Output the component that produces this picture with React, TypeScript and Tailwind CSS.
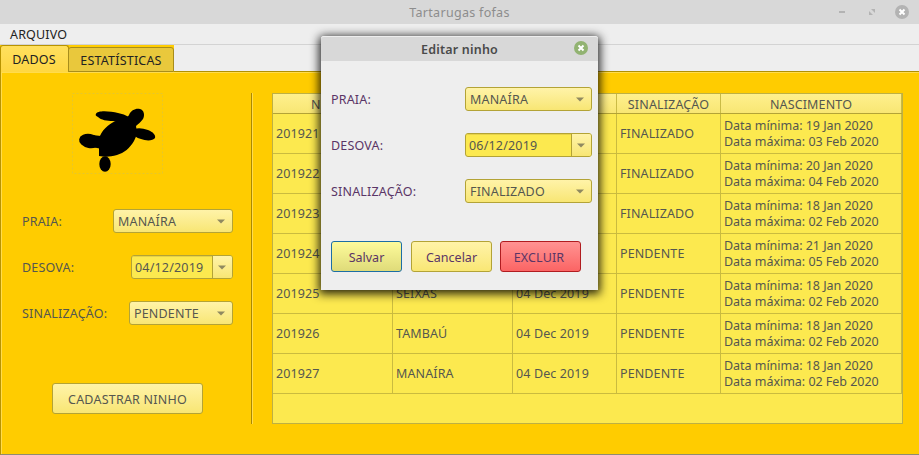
import React from "react";

const rows = [
  ["201921", "MANAÍRA", "04 Dec 2019", "FINALIZADO", "19 Jan 2020", "03 Feb 2020"],
  ["201922", "SEIXAS", "05 Dec 2019", "FINALIZADO", "20 Jan 2020", "04 Feb 2020"],
  ["201923", "MANAÍRA", "04 Dec 2019", "FINALIZADO", "18 Jan 2020", "02 Feb 2020"],
  ["201924", "MANAÍRA", "06 Dec 2019", "PENDENTE", "21 Jan 2020", "05 Feb 2020"],
  ["201925", "SEIXAS", "04 Dec 2019", "PENDENTE", "18 Jan 2020", "02 Feb 2020"],
  ["201926", "TAMBAÚ", "04 Dec 2019", "PENDENTE", "18 Jan 2020", "02 Feb 2020"],
  ["201927", "MANAÍRA", "04 Dec 2019", "PENDENTE", "18 Jan 2020", "02 Feb 2020"],
];

const columns = "grid grid-cols-[120px_120px_104px_104px_181px]";

function Arrow() {
  return (
    <svg className="h-[5px] w-2 shrink-0" viewBox="0 0 8 5">
      <path d="M0 .5h8L4 4.5z" fill="#8f8960" />
    </svg>
  );
}

function Combo({ children, className }: { children: React.ReactNode; className: string }) {
  return (
    <div
      className={`flex h-6 items-center justify-between rounded-[3px] border bg-linear-to-b from-[#fff3a8] to-[#f8e673] pr-[7px] pl-1 text-[#55574f] ${className}`}
    >
      <span className="pt-[2px] tracking-[0.18px]">{children}</span>
      <Arrow />
    </div>
  );
}

function DateField({ children, className }: { children: React.ReactNode; className: string }) {
  return (
    <div className={`flex h-6 overflow-hidden rounded-[3px] border bg-[#fce94f] text-[#55574f] ${className}`}>
      <span className="flex flex-1 items-center pt-[2px] pl-[3px] tracking-[0.18px] shadow-[inset_0_1px_0_#e6d248]">{children}</span>
      <span className="flex w-5 items-center justify-center border-l border-inherit bg-linear-to-b from-[#fff3a8] to-[#f8e673] pr-[2px]">
        <Arrow />
      </span>
    </div>
  );
}

function Field({ label, children }: { label: string; children: React.ReactNode }) {
  return (
    <div className="flex h-6 items-center justify-between">
      <span className="pt-[2px] tracking-[0.18px]">{label}</span>
      {children}
    </div>
  );
}

function Turtle() {
  return (
    <svg className="ml-[72px] h-[81px] w-[91px]" viewBox="0 0 91 81">
      <rect x=".5" y=".5" width="90" height="80" fill="none" stroke="#e5c62c" strokeDasharray="2 2" />
      <path d="M27 46C29 38 36 31 44 28C50 25 55 26 57 22C59 17 64 15 68 16C72 17 73 22 71 26C69 29 66 31 64 33C65 38 65 43 62 48C58 55 52 60 45 62C38 64 33 64 27 63V54Z" />
      <path d="M24 21C25 17 38 18 46 20Q52 21 57 24L54 32L41 28C35 28 29 27 26 24C24 23 23 22 24 21Z" />
      <path d="M62 36Q68 34 76 37C81 39 84 42 83 45C81 48 74 48 69 46Q65 45 61 42Z" />
      <ellipse cx="17.5" cy="48" rx="10.5" ry="7" transform="rotate(10 17.5 48)" />
      <path d="M20 42L29 43L30 56L20 54Z" />
      <ellipse cx="33" cy="71" rx="5.7" ry="7.8" />
    </svg>
  );
}

function CloseMark({ className }: { className: string }) {
  return (
    <svg className={`h-[14px] w-[14px] ${className}`} viewBox="0 0 14 14">
      <circle cx="7" cy="7" r="7" fill="currentColor" />
      <path d="M4.5 4.5l5 5M9.5 4.5l-5 5" stroke="#fff" strokeWidth="2" />
    </svg>
  );
}

function TitleBar() {
  return (
    <header className="grid h-6 grid-cols-[1fr_auto_1fr] items-center bg-[#d8d8d8] pr-[10px]">
      <span />
      <span className="pt-[2px] pl-[10px] tracking-[0.3px] text-[#8d8d8d]">Tartarugas fofas</span>
      <div className="flex items-center justify-end text-[#b3b3b3]">
        <span className="mr-6 h-[2px] w-[6px] bg-[#b3b3b3]" />
        <svg className="mr-5 h-[6px] w-[6px]" viewBox="0 0 6 6" fill="currentColor">
          <path d="M2 0h4v4zM0 2v4h4z" />
        </svg>
        <CloseMark className="-mt-px" />
      </div>
    </header>
  );
}

function Dialog() {
  return (
    <section className="absolute top-9 left-[321px] flex h-[254px] w-[277px] flex-col rounded-t-[3px] bg-[#eeeeee] text-[#5a3566] shadow-[0_2px_10px_2px_rgba(0,0,0,0.85)]">
      <div className="grid h-[25px] grid-cols-[1fr_auto_1fr] items-center rounded-t-[3px] border-t border-[#eeeeee] bg-[#d8d8d8] pr-[10px]">
        <span />
        <span className="pt-[2px] pl-[10px] font-semibold tracking-[0.2px] text-[#4a4a4a]">Editar ninho</span>
        <CloseMark className="-mt-[3px] justify-self-end text-[#92b372]" />
      </div>
      <div className="flex flex-col gap-[22px] pt-[26px] pr-[6px] pl-[10px]">
        <Field label="PRAIA:">
          <Combo className="w-[127px] border-[#b3a336]">MANAÍRA</Combo>
        </Field>
        <Field label="DESOVA:">
          <DateField className="w-[127px] border-[#b3a336]">06/12/2019</DateField>
        </Field>
        <Field label="SINALIZAÇÃO:">
          <Combo className="w-[127px] border-[#b3a336]">FINALIZADO</Combo>
        </Field>
      </div>
      <div className="flex pt-[38px] pl-[10px]">
        <button className="h-[31px] w-[71px] rounded-[3px] border border-[#1c6ea4] bg-linear-to-b from-[#fdfb9b] to-[#dfdb79] pt-[2px]">Salvar</button>
        <button className="ml-[9px] h-[31px] w-[81px] rounded-[3px] border border-[#b3a336] bg-linear-to-b from-[#fff3a8] to-[#f9e774] pt-[2px]">Cancelar</button>
        <button className="ml-2 h-[31px] w-[81px] rounded-[3px] border border-[#b01c20] bg-linear-to-b from-[#ff9292] to-[#fb6464] pt-[2px] pr-[3px] tracking-[0.15px]">EXCLUIR</button>
      </div>
    </section>
  );
}

export default function App() {
  return (
    <div className="relative flex h-[455px] w-[919px] flex-col overflow-hidden bg-[#eeeeee] font-['Noto_Sans',sans-serif] text-[12.5px] leading-4 whitespace-nowrap text-[#55574f]">
      <TitleBar />
      <nav className="flex h-[21px] items-center border-b border-[#d3d3d3] pt-[2px] pl-[10px] tracking-[0.15px] text-[#222]">ARQUIVO</nav>
      <div className="z-10 -mb-px flex h-[27px] w-[174px] items-end bg-[#ffcc00] text-[#222]">
        <div className="flex h-[27px] w-[69px] items-center justify-center rounded-t-[3px] border border-b-0 border-[#b89300] bg-linear-to-b from-[#ffe05e] to-[#ffd742] pt-px pr-px tracking-[0.15px]">DADOS</div>
        <div className="-ml-px flex h-[25px] w-[106px] items-center justify-center rounded-t-[3px] border border-[#a88d1b] bg-[#e9c83c] pt-[3px] tracking-[0.2px]">ESTATÍSTICAS</div>
      </div>
      <main className="flex flex-1 border-t border-b border-l border-t-[#b09000] border-b-[#8f8c70] border-l-[#b89300] bg-[#ffcc00] shadow-[inset_1px_1px_0_#ffdc4e]">
        <div className="-ml-px flex w-[251px] flex-col pt-[21px]">
          <Turtle />
          <div className="mt-[35px] flex flex-col gap-[22px] pr-[18px] pl-[22px]">
            <Field label="PRAIA:">
              <Combo className="w-[120px] border-[#b3a336]">MANAÍRA</Combo>
            </Field>
            <Field label="DESOVA:">
              <DateField className="w-[102px] border-[#b3a336]">04/12/2019</DateField>
            </Field>
            <Field label="SINALIZAÇÃO:">
              <Combo className="w-[104px] border-[#b3a336]">PENDENTE</Combo>
            </Field>
          </div>
          <button className="mt-[58px] ml-[52px] h-[31px] w-[151px] rounded-[3px] border border-[#b3a336] bg-linear-to-b from-[#fff3a8] to-[#f8e673] pt-[2px] tracking-[0.22px]">CADASTRAR NINHO</button>
        </div>
        <div className="mt-[21px] h-[331px] w-[2px] border-r border-l border-r-[#ffdc4e] border-l-[#ac8900]" />
        <div className="mt-[21px] ml-[19px] h-[331px] w-[631px] border border-[#bdb043] bg-[#fce94f]">
          <div className={`h-[20px] border-b border-[#b3a336] bg-linear-to-b from-[#fff08d] to-[#f8e673] text-center leading-[22px] tracking-[0.15px] ${columns}`}>
            {["NINHO", "PRAIA", "DESOVA", "SINALIZAÇÃO", "NASCIMENTO"].map((h) => (
              <span key={h} className="h-[19px] border-r border-[#cabb46]">{h}</span>
            ))}
          </div>
          {rows.map((r) => (
            <div key={r[0]} className={`h-10 ${columns}`}>
              {r.slice(0, 4).map((c, i) => (
                <span key={i} className="flex items-center border-r border-b border-[#cabb3f] pl-[3px] tracking-[0.12px]">{c}</span>
              ))}
              <span className="flex flex-col justify-center border-r border-b border-[#cabb3f] pl-[3px] tracking-[-0.03px]">
                <span>Data mínima: {r[4]}</span>
                <span>Data máxima: {r[5]}</span>
              </span>
            </div>
          ))}
        </div>
      </main>
      <Dialog />
    </div>
  );
}
